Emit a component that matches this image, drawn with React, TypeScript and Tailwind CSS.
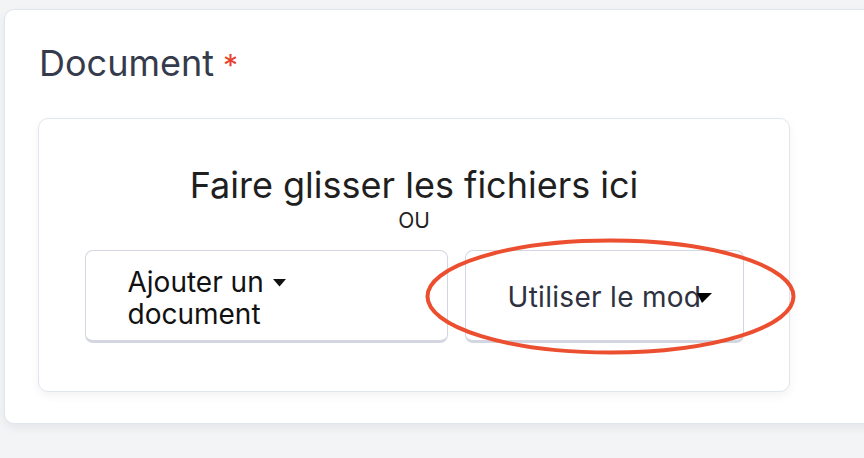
export default function App() {
  return (
    <div className="relative min-h-screen w-full overflow-hidden bg-[#f3f4f6] pl-[4px] pt-[9px] font-['Inter',sans-serif]">
      <div className="h-[415px] w-[900px] rounded-[10px] border-[1.5px] border-[#dfe6ee] bg-white pl-[33px] pt-[31px] shadow-[0_4px_10px_rgba(15,23,42,0.06)]">
        <div className="flex items-baseline text-[36px] leading-[44px] text-[#363b4c]">
          <span className="pl-[1px]">Document</span>
          <span className="ml-[9px] text-[30px] text-[#e8412c]">*</span>
        </div>

        {/* drop zone */}
        <div className="mt-[31px] flex h-[274px] w-[752px] flex-col items-center rounded-[10px] border-[1.5px] border-[#dfe6ee] bg-white pt-[46px] shadow-[0_4px_10px_rgba(15,23,42,0.05)]">
          <div className="text-[36px] leading-[40px] text-[#1f1f1f]">
            Faire glisser les fichiers ici
          </div>
          <div className="mt-[5px] text-[21px] leading-[22px] text-[#1f1f1f]">OU</div>

          <div className="mt-[18px] flex gap-[17px]">
            <button className="flex h-[93px] w-[363px] items-center rounded-[8px] border-[1.5px] border-b-[3px] border-[#d3d6e0] bg-white pl-[42px] pt-[4px] text-left text-[28px] leading-[32px] text-[#111111]">
              <span>
                <span className="flex items-center">
                  Ajouter un
                  <svg className="ml-[9px] mt-[3px]" width="13" height="8" viewBox="0 0 13 8">
                    <path d="M0 0 H13 L6.5 7.5 Z" fill="#111111" />
                  </svg>
                </span>
                <span className="block">document</span>
              </span>
            </button>
            <button className="flex h-[93px] w-[279px] items-center rounded-[8px] border-[1.5px] border-b-[3px] border-[#d3d6e0] bg-white pl-[42px] pt-[4px] text-[28px] leading-[31px] text-[#2e3140]">
              <span className="tracking-[0.3px]">Utiliser le mod</span>
              <svg className="-ml-[4px] mt-[1px]" width="15" height="10" viewBox="0 0 15 10">
                <path d="M0 0 H15 L5 10 Z" fill="#000000" />
              </svg>
            </button>
          </div>
        </div>
      </div>

      {/* annotation */}
      <svg className="pointer-events-none absolute left-0 top-0" width="864" height="458">
        <ellipse cx="610.5" cy="296.5" rx="183" ry="56" fill="none" stroke="#ec4f2f" strokeWidth="4" />
      </svg>
    </div>
  );
}
